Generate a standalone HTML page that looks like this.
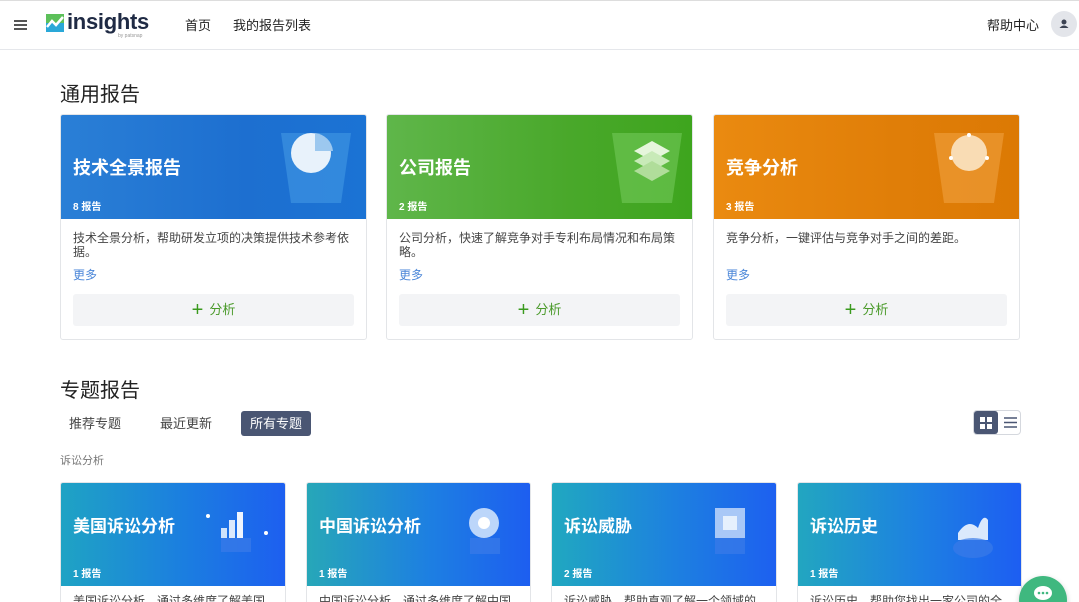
<!DOCTYPE html>
<html><head><meta charset="utf-8"><style>
*{box-sizing:border-box;margin:0;padding:0}
html,body{width:1079px;height:602px;overflow:hidden}
body{background:#fff;font-family:"Liberation Sans","Noto Sans CJK SC",sans-serif;color:#333;position:relative}
.hdr{position:absolute;left:0;top:0;width:1079px;height:50px;border-bottom:1px solid #e5e7eb;border-top:1px solid #ddd}
.abs{position:absolute}
.h2{font-size:20px;color:#222}
.card{position:absolute;border:1px solid #e3e5e8;border-radius:3px;background:#fff;overflow:hidden}
.ban{position:absolute;left:0;top:0;right:0;height:104px;color:#fff}
.ban .t{position:absolute;left:12px;top:39px;font-size:18px;font-weight:bold}
.ban .n{position:absolute;left:12px;top:83px;font-size:10px;font-weight:bold}
.desc{position:absolute;left:12px;top:116px;right:12px;font-size:12px;line-height:14px;color:#444}
.more{position:absolute;left:12px;top:151px;font-size:12px;color:#4a86d8}
.btn{position:absolute;left:12px;right:12px;top:179px;height:32px;background:#f3f4f6;border-radius:3px;text-align:center;line-height:32px;font-size:13px;color:#4a9a2a}
.btn b{font-size:20px;font-weight:normal;color:#3a9a1e;vertical-align:-2px;margin-right:6px}
.ban2{position:absolute;left:0;top:0;right:0;height:103px;color:#fff}
.ban2 .t{position:absolute;left:12px;top:29px;font-size:17px;font-weight:bold}
.ban2 .n{position:absolute;left:12px;top:82px;font-size:10px;font-weight:bold}
.tab{position:absolute;top:411px;height:25px;line-height:25px;font-size:13px;color:#444;padding:0 9px}
</style></head><body>
<div class="hdr">
 <div class="abs" style="left:14px;top:19px;width:13px;height:2px;background:#555;box-shadow:0 4px 0 #555,0 8px 0 #555"></div>
 <svg class="abs" style="left:46px;top:13px" width="18" height="18"><rect width="18" height="18" fill="#2aa8d8"/><rect width="18" height="9" fill="#5cc05a"/><polyline points="1,13 6,7 10,11 17,3" stroke="#fff" stroke-width="2.5" fill="none"/></svg>
 <div class="abs" style="left:67px;top:8px;font-size:22px;font-weight:bold;color:#1f2a44;letter-spacing:-0.3px">insights</div>
 <div class="abs" style="left:118px;top:32px;font-size:5px;color:#999">by patsnap</div>
 <div class="abs" style="left:185px;top:14px;font-size:13px;color:#222">首页</div>
 <div class="abs" style="left:233px;top:14px;font-size:13px;color:#222">我的报告列表</div>
 <div class="abs" style="left:987px;top:14px;font-size:13px;color:#222">帮助中心</div>
 <div class="abs" style="left:1051px;top:10px;width:26px;height:26px;border-radius:50%;background:#e3e5ea"><svg width="26" height="26"><circle cx="13" cy="11" r="2.5" fill="#3b4252"/><path d="M8.5 17 Q13 12 17.5 17Z" fill="#3b4252"/></svg></div>
</div>

<div class="abs h2" style="left:60px;top:78px">通用报告</div>

<div class="card" style="left:60px;top:114px;width:307px;height:226px">
 <div class="ban" style="background:linear-gradient(90deg,#2a7fd6,#1d6fd0 60%,#1b73d4)">
  <svg class="abs" style="left:210px;top:8px" width="90" height="90"><polygon points="10,10 80,10 70,80 20,80" fill="#4aa0e8" opacity=".5"/><circle cx="40" cy="30" r="20" fill="#e8f2fb"/><path d="M44 10 A20 20 0 0 1 62 28 L44 28Z" fill="#9cc8ef"/></svg>
  <div class="t">技术全景报告</div><div class="n">8 报告</div></div>
 <div class="desc">技术全景分析，帮助研发立项的决策提供技术参考依据。</div>
 <div class="more">更多</div>
 <div class="btn"><b>+</b>分析</div>
</div>
<div class="card" style="left:386px;top:114px;width:307px;height:226px">
 <div class="ban" style="background:linear-gradient(90deg,#5fb64a,#49a82a 60%,#3ea51e)">
  <svg class="abs" style="left:215px;top:8px" width="90" height="90"><polygon points="10,10 80,10 70,80 20,80" fill="#7cd064" opacity=".5"/><polygon points="32,28 50,18 68,28 50,38" fill="#e6f6dc"/><polygon points="32,38 50,28 68,38 50,48" fill="#c8eab8"/><polygon points="32,48 50,38 68,48 50,58" fill="#b0dd9a"/></svg>
  <div class="t">公司报告</div><div class="n">2 报告</div></div>
 <div class="desc">公司分析，快速了解竞争对手专利布局情况和布局策略。</div>
 <div class="more">更多</div>
 <div class="btn"><b>+</b>分析</div>
</div>
<div class="card" style="left:713px;top:114px;width:307px;height:226px">
 <div class="ban" style="background:linear-gradient(90deg,#ea8a10,#e07e08 60%,#dc7904)">
  <svg class="abs" style="left:210px;top:8px" width="90" height="90"><polygon points="10,10 80,10 70,80 20,80" fill="#f4a84a" opacity=".5"/><circle cx="45" cy="30" r="18" fill="#f9dcb4"/><circle cx="45" cy="12" r="2" fill="#fff"/><circle cx="27" cy="35" r="2" fill="#fff"/><circle cx="63" cy="35" r="2" fill="#fff"/></svg>
  <div class="t">竞争分析</div><div class="n">3 报告</div></div>
 <div class="desc">竞争分析，一键评估与竞争对手之间的差距。</div>
 <div class="more">更多</div>
 <div class="btn"><b>+</b>分析</div>
</div>

<div class="abs h2" style="left:60px;top:374px">专题报告</div>
<div class="tab" style="left:60px">推荐专题</div>
<div class="tab" style="left:151px">最近更新</div>
<div class="tab" style="left:241px;background:#4a5673;color:#fff;border-radius:3px">所有专题</div>
<div class="abs" style="left:973px;top:410px;width:48px;height:25px;border:1px solid #d5d8de;border-radius:4px">
 <div class="abs" style="left:0;top:0;width:24px;height:23px;background:#4a5673;border-radius:3px"><svg width="24" height="23"><rect x="6" y="6" width="5" height="5" fill="#fff"/><rect x="13" y="6" width="5" height="5" fill="#fff"/><rect x="6" y="13" width="5" height="5" fill="#fff"/><rect x="13" y="13" width="5" height="5" fill="#fff"/></svg></div>
 <svg class="abs" style="left:24px;top:0" width="24" height="23"><path d="M6 7H19M6 11.5H19M6 16H19" stroke="#4a5673" stroke-width="1.5"/></svg>
</div>
<div class="abs" style="left:60px;top:452px;font-size:11px;color:#777">诉讼分析</div>

<div class="card" style="left:60px;top:482px;width:226px;height:130px">
 <div class="ban2" style="background:linear-gradient(90deg,#1fa3c4,#1b7ee0 55%,#1d5ff0)">
  <svg class="abs" style="left:145px;top:15px" width="75" height="80"><rect x="15" y="30" width="6" height="10" fill="#cfe3fb"/><rect x="23" y="22" width="6" height="18" fill="#dbe9fc"/><rect x="31" y="14" width="6" height="26" fill="#eef5fe"/><rect x="15" y="40" width="30" height="14" fill="#3b7be8" opacity=".7"/><circle cx="2" cy="18" r="2" fill="#fff"/><circle cx="60" cy="35" r="2" fill="#fff"/></svg>
  <div class="t">美国诉讼分析</div><div class="n">1 报告</div></div>
 <div class="desc" style="top:111px">美国诉讼分析，通过多维度了解美国专</div>
</div>
<div class="card" style="left:306px;top:482px;width:225px;height:130px">
 <div class="ban2" style="background:linear-gradient(90deg,#27a7b8,#1d7fe2 55%,#1d5ef0)">
  <svg class="abs" style="left:145px;top:15px" width="75" height="80"><circle cx="32" cy="25" r="15" fill="#bcd6fa"/><circle cx="32" cy="25" r="6" fill="#fff"/><rect x="18" y="40" width="30" height="16" fill="#3b7be8" opacity=".7"/></svg>
  <div class="t">中国诉讼分析</div><div class="n">1 报告</div></div>
 <div class="desc" style="top:111px">中国诉讼分析，通过多维度了解中国专</div>
</div>
<div class="card" style="left:551px;top:482px;width:226px;height:130px">
 <div class="ban2" style="background:linear-gradient(90deg,#20a8c0,#1d80e0 55%,#1d60f0)">
  <svg class="abs" style="left:145px;top:15px" width="75" height="80"><rect x="18" y="10" width="30" height="30" fill="#a9c8f7"/><rect x="26" y="18" width="14" height="14" fill="#e6f0fd"/><rect x="18" y="40" width="30" height="16" fill="#3b7be8" opacity=".7"/></svg>
  <div class="t">诉讼威胁</div><div class="n">2 报告</div></div>
 <div class="desc" style="top:111px">诉讼威胁，帮助直观了解一个领域的诉</div>
</div>
<div class="card" style="left:797px;top:482px;width:225px;height:130px">
 <div class="ban2" style="background:linear-gradient(90deg,#22a6c0,#1d80e2 55%,#1d5ef2)">
  <svg class="abs" style="left:145px;top:15px" width="75" height="80"><path d="M15 35 Q25 20 35 30 Q40 15 45 22 L45 42 L15 42Z" fill="#dbe9fc"/><ellipse cx="30" cy="50" rx="20" ry="10" fill="#3b7be8" opacity=".7"/></svg>
  <div class="t">诉讼历史</div><div class="n">1 报告</div></div>
 <div class="desc" style="top:111px">诉讼历史，帮助您找出一家公司的全部</div>
</div>

<div class="abs" style="left:1019px;top:576px;width:48px;height:48px;border-radius:50%;background:#3fb87f;box-shadow:0 2px 6px rgba(0,0,0,.2)"><svg width="48" height="48"><ellipse cx="24" cy="17" rx="9" ry="7" fill="#fff"/><circle cx="20" cy="17" r="1.3" fill="#3fb87f"/><circle cx="24" cy="17" r="1.3" fill="#3fb87f"/><circle cx="28" cy="17" r="1.3" fill="#3fb87f"/></svg></div>
</body></html>
